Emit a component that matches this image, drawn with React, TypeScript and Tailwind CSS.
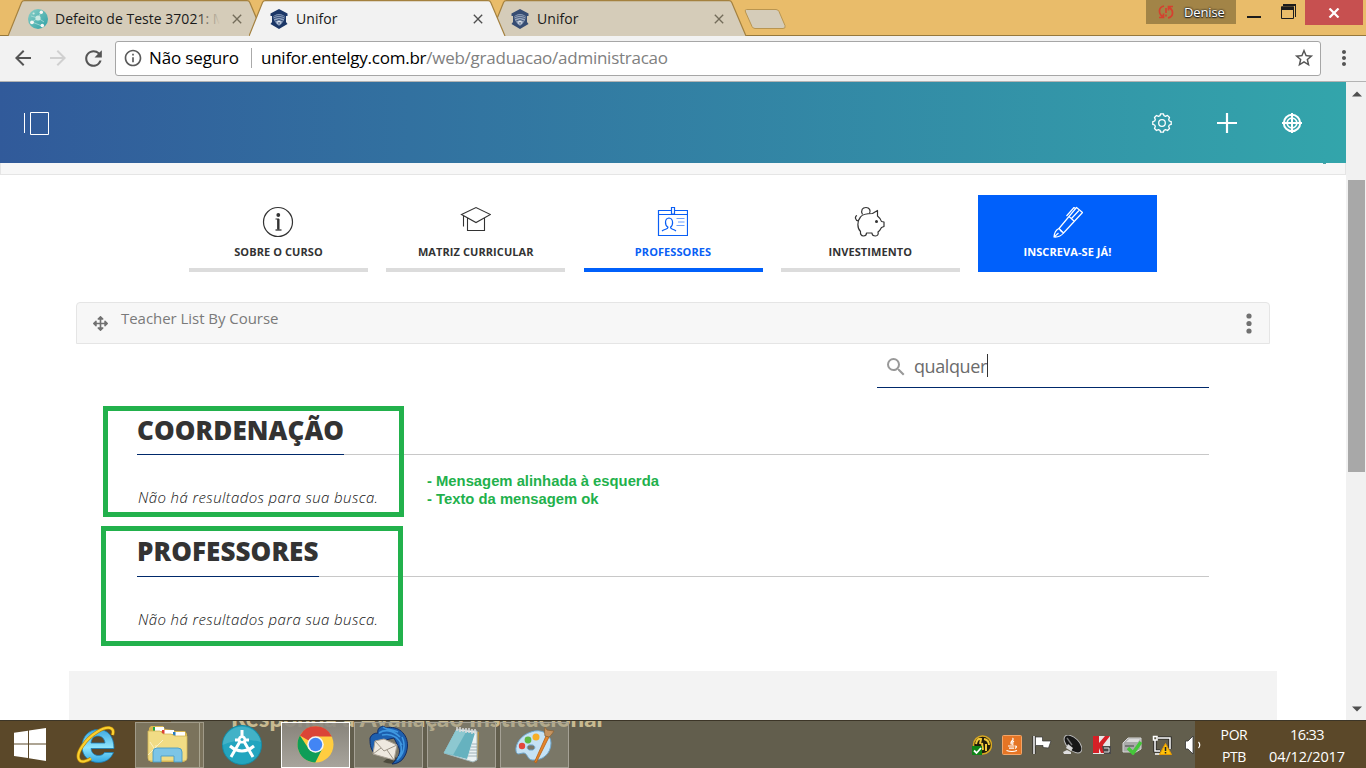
import React from "react";
import {
  MdArrowBack,
  MdArrowForward,
  MdClose,
  MdInfoOutline,
  MdMoreVert,
  MdRefresh,
  MdSearch,
  MdStarBorder,
} from "react-icons/md";
import { FaArrowsAlt } from "react-icons/fa";

/* ---------- Browser chrome ---------- */

function GlobeFavicon() {
  return (
    <svg width="20" height="20" viewBox="0 0 20 20">
      <defs>
        <linearGradient id="globe" x1="0" y1="0" x2="1" y2="1">
          <stop offset="0" stopColor="#7fd0c9" />
          <stop offset="1" stopColor="#119aa3" />
        </linearGradient>
      </defs>
      <circle cx="10" cy="10" r="10" fill="url(#globe)" />
      <path d="M4 13 L10 9 L13 3 M10 9 L16 13 M4 13 L14 17 M3 7 L10 9" stroke="#a5e0dc" strokeWidth="0.8" fill="none" />
      <circle cx="10" cy="9" r="2.6" fill="#c9efea" />
      <circle cx="4" cy="13.3" r="1.9" fill="#fff" />
      <circle cx="13.3" cy="3.2" r="1.7" fill="#fff" />
      <circle cx="14.3" cy="16.6" r="1.8" fill="#fff" />
      <circle cx="5.6" cy="4.5" r="1.1" fill="#c9efea" />
    </svg>
  );
}

function CrestFavicon() {
  return (
    <svg width="20" height="20" viewBox="0 0 20 20">
      <path d="M10 0 L18.5 4.5 V7 H17 V13 L18.500 15 L10 20 L1.500 15 L3 13 V7 H1.500 V4.500 Z" fill="#1c3767" />
      <path d="M4.500 7 Q10 3 15.500 7 Q16 12.500 10 16.800 Q4 12.500 4.500 7 Z" fill="#8fa2bf" />
      <path d="M5 7.500 Q10 5 15 7.500 M5 9.500 Q10 7 15 9.500 M6 12 Q10 9 14 12" fill="none" stroke="#2b4573" strokeWidth="0.9" />
      <path d="M8.500 12 H11.500 V15 H8.500 Z" fill="#e2e8f0" />
      <path d="M9.500 13 H10.500 V15 H9.500 Z" fill="#1c3767" />
    </svg>
  );
}

function Tab({
  title,
  active,
  icon,
  className,
  fade,
}: {
  title: string;
  active?: boolean;
  icon: React.ReactNode;
  className: string;
  fade?: boolean;
}) {
  return (
    <div className={`relative h-9 w-[257px] shrink-0 ${className}`}>
      <svg className="absolute inset-0" width="257" height="36" viewBox="0 0 257 36">
        <path
          d="M0 36 L13.500 2.500 Q14.300 0.700 16.500 0.700 H239 Q241 0.700 241.800 2.500 L256 36"
          fill={active ? "#f2f2f2" : "#d5ccb9"}
          stroke="#a4813f"
          strokeWidth="1.2"
        />
      </svg>
      <div className="relative flex h-9 items-center pt-[2px] pl-5">
        <span className={active ? "" : "opacity-85"}>{icon}</span>
        <span
          className={`relative ml-[7px] w-[165px] overflow-hidden text-[14px] leading-5 whitespace-nowrap text-[#1a1a1a] ${fade ? "tracking-[0.020px]" : "tracking-[0.080px]"}`}
        >
          {title}
          {fade && <span className="absolute top-0 right-0 h-5 w-5 bg-linear-to-r from-[#d5ccb9]/20 to-[#d5ccb9]" />}
        </span>
        <MdClose size={16} className={`ml-[9px] ${active ? "text-[#4f4f4f]" : "text-[#736c5a]"}`} />
      </div>
    </div>
  );
}

function TabStrip() {
  return (
    <div className="relative flex h-9 border-b border-[#96783c] bg-[#e9bc6a] pl-2">
      <Tab title="Defeito de Teste 37021: M" icon={<GlobeFavicon />} className="" fade />
      <Tab title="Unifor" icon={<CrestFavicon />} className="z-10 -ml-4" active />
      <Tab title="Unifor" icon={<CrestFavicon />} className="-ml-4" />
      <svg className="mt-[8px] -ml-[4px] shrink-0" width="44" height="23" viewBox="0 0 44 23">
        <path
          d="M3.500 1.500 H33 Q35 1.500 36 3.500 L42 17.500 Q43 20.500 40 20.500 H12 Q10 20.500 9 18.500 L2.500 4 Q1.500 1.500 3.500 1.500 Z"
          fill="#d5ccb9"
          stroke="#b99550"
        />
      </svg>
      <div className="ml-auto flex pr-[3px]">
        <div className="flex h-6 w-[90px] items-center bg-[#a28447] pl-3">
          <svg width="16" height="16" viewBox="0 0 16 16" fill="none" stroke="#d5402f" strokeWidth="1.700">
            <path d="M6 2 C0.500 3 0 9 4.500 12.500 M1 13.500 H5.500 V9.500 M10 14 C15.500 13 16 7 11.500 3.500 M15 2.500 H10.500 V6.500" />
            <path d="M8 4 V9 M8 10.500 V12.500" />
          </svg>
          <span className="ml-[10px] text-[13px] leading-5 font-medium tracking-[-0.15px] text-white [text-shadow:0_0_2px_#222,0_0_2px_#222,0_1px_1px_#222]">Denise</span>
        </div>
        <svg className="ml-[11px]" width="58" height="24" viewBox="0 0 58 24">
          <path d="M0 16 H14 V18 H0 Z" fill="#1c1c1c" />
          <path d="M36 4 H49 V17 H48 V6 H36 Z" fill="#1c1c1c" />
          <path d="M34.500 7 H46.500 V18.500 H34.500 Z" fill="none" stroke="#1c1c1c" />
          <path d="M34 6.500 H47 V10 H34 Z" fill="#1c1c1c" />
        </svg>
        <div className="flex h-[25px] w-[58px] items-center justify-center bg-[#c75050]">
          <svg width="12" height="10" viewBox="0 0 12 10">
            <path d="M1.500 0.500 L10.500 9.500 M10.500 0.500 L1.500 9.500" stroke="#fff" strokeWidth="2.200" />
          </svg>
        </div>
      </div>
    </div>
  );
}

function Toolbar() {
  return (
    <div className="flex h-[46px] items-center border-b border-[#b3b3b3] bg-[#f2f2f2] pb-px">
      <MdArrowBack size={24} className="ml-[11px] text-[#555]" />
      <MdArrowForward size={24} className="ml-[11px] text-[#d0d0d0]" />
      <MdRefresh size={25} className="ml-[11px] text-[#555]" />
      <div className="ml-[9px] flex h-[35px] w-[1206px] items-center rounded-[3px] border border-[#a6a6a6] bg-white pl-[7px] text-[17px]">
        <MdInfoOutline size={20} className="text-[#5a5a5a]" />
        <span className="ml-[6px] w-[91px] tracking-[-0.150px] whitespace-nowrap text-black">Não seguro</span>
        <span className="ml-[11px] h-5 w-px bg-[#aaa]" />
        <span className="ml-[9px] tracking-[-0.250px] whitespace-nowrap text-[#808080]">
          <span className="text-black">unifor.entelgy.com.br</span>/web/graduacao/administracao
        </span>
        <MdStarBorder size={22} className="mr-[5px] ml-auto text-[#555]" />
      </div>
      <MdMoreVert size={24} className="ml-[11px] text-[#555]" />
    </div>
  );
}

/* ---------- Page ---------- */

function SiteHeader() {
  return (
    <header className="flex h-[81px] items-center bg-linear-to-r from-[#315a9a] to-[#33a5ab] pr-[44px] pl-6">
      <svg className="mt-[2px]" width="26" height="24" viewBox="0 0 26 24" fill="none" stroke="#fff">
        <path d="M0.500 1 V21 M6.500 0.500 H24.500 V22.500 H6.500 Z" />
      </svg>
      <svg className="mt-px ml-auto" width="20" height="20" viewBox="0 0 20 20" fill="none" stroke="#fff" strokeWidth="1.300">
        <path d="M8.600 0.800 H11.400 L12 2.700 L13.500 3.300 L15.400 2.400 L17.500 4.500 L16.700 6.400 L17.300 8 L19.200 8.600 V11.400 L17.300 12 L16.700 13.600 L17.500 15.500 L15.500 17.500 L13.600 16.700 L12 17.300 L11.400 19.200 H8.600 L8 17.300 L6.400 16.700 L4.500 17.500 L2.500 15.500 L3.300 13.600 L2.700 12 L0.800 11.400 V8.600 L2.700 8 L3.300 6.400 L2.500 4.500 L4.500 2.500 L6.400 3.300 L8 2.700 Z" strokeLinejoin="round" />
        <circle cx="10" cy="10" r="3.300" />
      </svg>
      <svg className="mt-px ml-[45px]" width="20" height="20" viewBox="0 0 20 20" stroke="#fff" strokeWidth="2.200">
        <path d="M10 0 V20 M0 10 H20" />
      </svg>
      <svg className="mt-px ml-[45px]" width="20" height="20" viewBox="0 0 20 20" fill="none" stroke="#fff">
        <circle cx="10" cy="10" r="8.200" strokeWidth="2" />
        <circle cx="10" cy="10" r="4.800" strokeWidth="1.700" />
        <path d="M10 0 V20 M0 10 H20" strokeWidth="2" />
      </svg>
    </header>
  );
}

const InfoIcon = () => (
  <svg width="32" height="32" viewBox="0 0 32 32" fill="none" stroke="#333">
    <circle cx="16" cy="16" r="14.500" strokeWidth="1.200" />
    <circle cx="16.300" cy="9" r="1.900" fill="#333" stroke="none" />
    <path d="M13.500 13 H16.500 V23.500" strokeWidth="1.100" />
    <path d="M16.300 13 V23.500" strokeWidth="2.400" />
    <path d="M13.500 24 H19.500" strokeWidth="1.300" />
  </svg>
);

const CapIcon = () => (
  <svg width="32" height="32" viewBox="0 0 32 32" fill="none" stroke="#333" strokeWidth="1.100">
    <path d="M2.500 8.500 L17 1.500 L31.500 8.500 L17 16.500 Z M8.500 11.800 V24.500 H25.500 V11.800 M4.500 9.500 V20.500" />
  </svg>
);

const BadgeIcon = () => (
  <svg width="32" height="32" viewBox="0 0 32 32" fill="none" stroke="#0a5ff5" strokeWidth="1.200">
    <path d="M2.500 4.500 H31.500 V29.500 H2.500 Z M2.500 8.500 H31.500" />
    <path d="M15.500 1.500 H18.500 V8 H15.500 Z" fill="#fff" />
    <path d="M6 25 C9 22.700 12 23.500 12 21.200 C8.500 19 8.500 12.500 13 12 C17.500 12.500 17.500 19 14.500 21.200 C14.500 23.500 17 22.700 20 25" />
    <path d="M20.500 12.500 H28.500 M22 16 H28.500 M20.500 19.500 H28.500" stroke="#6aa0ff" />
  </svg>
);

const PigIcon = () => (
  <svg width="32" height="32" viewBox="0 0 32 32" fill="none" stroke="#333" strokeWidth="1.200" strokeLinejoin="round">
    <g transform="translate(1 0)">
      <path d="M6.500 11 C8 8.500 12 7.500 18.500 7.500 L23.500 4.500 V10 C26 12 27 13 27.500 15.500 L30 16 V20.500 L27.500 21.500 C26.500 23.500 25.500 25 24 26 Q25 29.500 21.500 30 Q18 30 18 27 H12.500 Q12.500 30 9.500 30 Q6 29.500 6.500 25.500 C3 22 3 15 6.500 11 Z" />
      <path d="M8.500 8.500 C6.500 4 8.500 1.500 12 1.500 C15.500 1.500 17 4.500 15.500 7.500 M4.500 15 C1 14.500 0.500 10.500 3 9.500" />
      <circle cx="22.500" cy="15.500" r="1.500" fill="#333" stroke="none" />
    </g>
  </svg>
);

const PenIcon = () => (
  <svg width="32" height="32" viewBox="0 0 32 32" fill="none" stroke="#fff" strokeWidth="1.200" strokeLinejoin="round">
    <path d="M25.500 1.500 L31.500 6.500 L12.500 27 L8 22.500 Z" />
    <path d="M24.500 2.500 L23 1.500 L15.500 10 M28 4.500 L20 13 M18 10.500 L23 15" />
    <path d="M8 22.500 Q3.500 24.500 3 31 Q9 31.500 12.500 27 M3 31 L7.500 27 M9 24 L11 26" />
  </svg>
);

const tabs = [
  { label: "SOBRE O CURSO", icon: <InfoIcon />, style: "border-[#dcdcdc] text-[#333]" },
  { label: "MATRIZ CURRICULAR", icon: <CapIcon />, style: "border-[#dcdcdc] text-[#333]" },
  { label: "PROFESSORES", icon: <BadgeIcon />, style: "border-[#0060fb] text-[#0a5ff5]" },
  { label: "INVESTIMENTO", icon: <PigIcon />, style: "border-[#dcdcdc] text-[#333]" },
  { label: "INSCREVA-SE JÁ!", icon: <PenIcon />, style: "border-[#0060fb] bg-[#0060fb] text-white" },
];

function CourseNav() {
  return (
    <nav className="mt-5 ml-[189px] grid w-[968px] grid-cols-5 gap-[18.250px]">
      {tabs.map((t) => (
        <div key={t.label} className={`flex h-[77px] flex-col items-center border-b-4 pt-[11px] ${t.style}`}>
          <span className="mr-[2px] block h-8">{t.icon}</span>
          <span className="mt-[5px] text-[11px] leading-[18px] font-bold tracking-[0.080px] whitespace-nowrap">{t.label}</span>
        </div>
      ))}
    </nav>
  );
}

function Section({ title, titlePadding }: { title: string; titlePadding: string }) {
  return (
    <section className="mr-[137px] ml-[137px]">
      <div className="flex h-[67px] items-end border-b border-[#c8c8c8]">
        <h2
          className={`-mb-px border-b border-[#00296b] text-[26px] leading-9 font-extrabold tracking-[0.080px] text-[#333] ${titlePadding}`}
        >
          {title}
        </h2>
      </div>
      <p className="mt-[30px] h-[25px] pl-px text-[15px] leading-6 font-light tracking-[0.400px] text-[#111] italic">
        Não há resultados para sua busca.
      </p>
    </section>
  );
}

function Page() {
  return (
    <div className="relative h-full w-[1346px] overflow-hidden bg-white font-['Open_Sans',sans-serif]">
      <SiteHeader />
      <div className="flex h-3 border-x border-b border-[#e5e5e5] bg-[#f7f7f7]">
        <span className="mr-[19px] ml-auto h-px w-[3px] bg-[#4fa3a5]" />
      </div>
      <CourseNav />
      <div className="mt-[30px] mr-[76px] ml-[76px] flex h-[42px] rounded-t-[4px] border border-[#e5e5e5] bg-[#f7f7f7] pl-4 text-[#717171]">
        <FaArrowsAlt size={15} className="mt-[13px]" />
        <span className="ml-[13px] pt-[4px] text-[15px] leading-[22px] tracking-[-0.040px] whitespace-nowrap text-[#7a7a7a]">Teacher List By Course</span>
        <svg className="mt-[10px] mr-[17px] ml-auto" width="6" height="21" viewBox="0 0 6 21" fill="#717171">
          <circle cx="3" cy="3" r="2.600" />
          <circle cx="3" cy="10.500" r="2.600" />
          <circle cx="3" cy="18" r="2.600" />
        </svg>
      </div>
      <div className="mr-[137px] ml-auto flex h-11 w-[332px] items-center border-b border-[#00296b] pl-[7px]">
        <MdSearch size={24} className="mt-[2px] text-[#999]" />
        <span className="ml-[6px] text-[18px] leading-6 tracking-[-0.400px] text-[#6b6b6b]">qualquer</span>
        <span className="h-[23px] w-px bg-[#333]" />
      </div>
      <Section title="COORDENAÇÃO" titlePadding="pb-[6px]" />
      <Section title="PROFESSORES" titlePadding="pb-[7px]" />
      <footer className="mt-[39px] mr-[69px] ml-[69px] h-[60px] bg-[#f3f3f3]" />

      {/* Review annotations drawn over the page */}
      <div className="absolute top-[324px] left-[103px] h-[111px] w-[301px] border-5 border-[#22b14c]" />
      <div className="absolute top-[444px] left-[101px] h-[120px] w-[302px] border-5 border-[#22b14c]" />
      <div className="absolute top-[390px] left-[427px] font-['Liberation_Sans',sans-serif] text-[14.800px] leading-[18px] font-bold whitespace-nowrap text-[#22b14c]">
        <p>- Mensagem alinhada à esquerda</p>
        <p>- Texto da mensagem ok</p>
      </div>
    </div>
  );
}

function Scrollbar() {
  return (
    <div className="flex w-5 flex-col items-center bg-[#f1f1f1] pl-px">
      <svg className="mt-[9px] shrink-0" width="10" height="6" viewBox="0 0 10 6">
        <path d="M0 5.500 L5 0.500 L10 5.500 Z" fill="#505050" />
      </svg>
      <div className="mt-[83px] h-[292px] w-[17px] shrink-0 bg-[#a8a8a8]" />
      <svg className="mt-auto mb-2 shrink-0" width="10" height="6" viewBox="0 0 10 6">
        <path d="M0 0.500 L5 5.500 L10 0.500 Z" fill="#505050" />
      </svg>
    </div>
  );
}

/* ---------- Taskbar ---------- */

const IeIcon = () => (
  <svg width="40" height="40" viewBox="0 0 40 40" fill="none">
    <defs>
      <linearGradient id="ie" x1="0" y1="0" x2="0" y2="1">
        <stop offset="0" stopColor="#3fa9e0" />
        <stop offset="0.550" stopColor="#8fe6fd" />
        <stop offset="1" stopColor="#2fa7e2" />
      </linearGradient>
    </defs>
    <path d="M37.500 27.500 C35 34 29 37.500 22.500 37.500 C13 37.500 6 31 6 21.500 C6 11.500 13 4.500 22 4.500 C32 4.500 38 11.500 38 23.500 H15 C15.500 28 18.500 30.500 22.500 30.500 C25.500 30.500 27.500 29.500 28.500 27.500 Z M15 18 H29 C28.500 13.500 25.500 11 22 11 C18 11 15.500 13.500 15 18 Z" fill="url(#ie)" fillRule="evenodd" stroke="#1b7fb9" strokeWidth="0.800" />
    <path d="M36.500 10 C39.500 1.500 31 0.500 21 7 C9 14.500 -0.500 28.500 3 34.500 C5 38 10.500 36.500 15 33.500" stroke="#b98608" strokeWidth="3.400" />
    <path d="M36.500 10 C39.500 1.500 31 0.500 21 7 C9 14.500 -0.500 28.500 3 34.500 C5 38 10.500 36.500 15 33.500" stroke="#fbd02f" strokeWidth="2.100" />
  </svg>
);

const ExplorerIcon = () => (
  <svg width="42" height="40" viewBox="0 0 42 40">
    <path d="M2 3 L4 1 H16 L18 4 L26 5 L28 6 H38 L40 9 V34 L37 37 H4 L1 35 Z" fill="#d9b64f" />
    <path d="M6 2 H17 V6 H6 Z M15 5 H27 V9 H15 Z M26 7 H38 V11 H26 Z" fill="#fff" />
    <path d="M6 2 H8 V6 H6 Z" fill="#23a343" />
    <path d="M15 5 H17.500 V9 H15 Z" fill="#dd4236" />
    <path d="M26 7 H28.500 V11 H26 Z" fill="#257dc2" />
    <path d="M1 6 H13 L16 9 H24 L28 11 H40 V33 Q40 36 37 36 H4 Q1 36 1 33 Z" fill="#f1dc85" stroke="#d3b557" strokeWidth="0.800" />
    <path d="M1 30 L9 22 L16 15 M3 17 L9 26 M9 20 V30" stroke="#fffbe0" opacity="0.700" />
    <path d="M6 37 V27 Q6 23 10 23 H31 Q35 23 35 27 V37 H27 V31 H14 V37 Z" fill="#7dc5e6" stroke="#4a9bc4" strokeWidth="0.900" />
  </svg>
);

const CompassIcon = () => (
  <svg width="40" height="40" viewBox="0 0 40 40" fill="none">
    <circle cx="20" cy="20" r="19.500" fill="#23a5bf" stroke="#168ba5" />
    <path d="M0.500 20 A19.500 19.500 0 0 1 39 17 Q20 12 0.500 20" fill="#62c0d0" opacity="0.500" />
    <path d="M20 5 V11 M20 13 L9 32 M20 13 L31 32 M13 15 H27 M8 21 Q20 31 32 21" stroke="#fff" strokeWidth="3" />
    <circle cx="20" cy="14.500" r="4" fill="#fff" />
    <circle cx="20" cy="14.500" r="1.500" fill="#36adc4" />
  </svg>
);

const ChromeIcon = () => (
  <svg width="37" height="37" viewBox="0 0 37 37">
    <circle cx="18.500" cy="18.500" r="18" fill="#ffcd40" />
    <path d="M18.500 18.500 L2.900 9.500 A18 18 0 0 1 34.800 10.500 H18.500 Z" fill="#db4437" />
    <path d="M2.900 9.500 A18 18 0 0 0 18.300 36.500 L25.400 22.500 L18.500 26.500 L11.500 22.500 Z" fill="#0f9d58" />
    <circle cx="18.500" cy="18.500" r="8.300" fill="#f4f4f4" />
    <circle cx="18.500" cy="18.500" r="6.700" fill="#4285f4" />
  </svg>
);

const ThunderbirdIcon = () => (
  <svg width="40" height="40" viewBox="0 0 40 40">
    <path d="M14 37 Q28 42 35 33 L20 32 Z" fill="#4c4a3d" />
    <path d="M1 13 Q3 8 9 8 C8 5 10 2 14 1 L17 3 C29 0 39 9 38.500 21 C38 31 32 39 23 39 C28 34 32 29 30 23 L25 13 L8 17 L5 28 C1 23 1 18 1 13 Z" fill="#1d5fae" stroke="#112d66" />
    <path d="M10 8 C16 4 24 5 31 12 M13 10 C22 8 29 12 33 20 M14 2 C17 5 23 4 29 7 M33 12 C37 20 35 29 28 35 M31 18 C34 24 32 30 29 33" stroke="#3f98e0" strokeWidth="1.600" fill="none" />
    <path d="M6 16 L15 14 L28 20 L25 35 L4 29 Z" fill="#eee9df" stroke="#aaa296" />
    <path d="M6 16 L15 26 L28 20 M4 29 L12 23 M25 35 L18 25" fill="none" stroke="#9d9588" />
  </svg>
);

const NotepadIcon = () => (
  <svg width="38" height="38" viewBox="0 0 38 38">
    <path d="M15 3 L36 6 L35 32 L29 36 Z" fill="#b9903c" />
    <path d="M14 3 L34 5 V34 L30 36 L1 27 Z" fill="#eaf2f3" stroke="#a3b8bd" />
    <path d="M13 4 L32 7 L24 33 L1 27 Z" fill="#66b2bf" />
    <path d="M13 4 L23 6 L10 29 L1 27 Z" fill="#8dc8d0" />
    <path d="M29 18 H34 M28 21 H34 M27 24 H34 M26 27 H34 M25 30 H34" stroke="#8da1a8" strokeWidth="0.800" />
    <path d="M14 1 V5 M17 1 V6 M20 2 V6 M23 2 V7 M26 2 V7 M29 3 V8 M32 3 V8" stroke="#d9d9d9" strokeWidth="1.500" />
  </svg>
);

const PaintIcon = () => (
  <svg width="40" height="40" viewBox="0 0 40 40">
    <path d="M16 7 C26 3 36 9 36 18 C36 29 27 36 17 35 C12 34 13 29 9 28 C5 28 2 31 1 26 C0 19 6 10 16 7 Z M16 20 A3 2.600 0 1 0 16 25 A3 2.600 0 1 0 16 20" fill="#c5e2f5" stroke="#6fa7ce" fillRule="evenodd" />
    <circle cx="7" cy="21" r="3.200" fill="#e2463c" />
    <circle cx="13" cy="15" r="3.400" fill="#5fb846" />
    <circle cx="21" cy="12" r="3.500" fill="#f7ae27" />
    <path d="M31 11 L34 12 L21 38 L19.500 37 Z" fill="#e6862b" stroke="#b35d14" strokeWidth="0.800" />
    <path d="M30 2 L32 5 L39 6 Q36 11 34 12 L30 11 Q29 7 30 2 Z" fill="#c69460" stroke="#8e6536" strokeWidth="0.800" />
  </svg>
);

function TaskButton({ icon, active }: { icon: React.ReactNode; active?: boolean }) {
  return (
    <div
      className={`mr-1 flex h-[46px] w-[69px] shrink-0 items-center justify-center border ${
        active ? "border-white bg-linear-to-b from-[#8c8880]/90 to-[#a8a49c]" : "border-[#a5a195] bg-[#9a9688]/45"
      }`}
    >
      {icon}
    </div>
  );
}

function Tray() {
  return (
    <div className="ml-auto flex items-center gap-[10px]">
      <svg width="20" height="20" viewBox="0 0 20 20">
        <circle cx="10.500" cy="10" r="9" fill="#211b0b" stroke="#d8a820" strokeWidth="1.500" />
        <path d="M4 9 Q5 3 9 4 L8 9 M12 4 Q17 5 17 10 M10 8 L11 15 M14 9 L14 16" stroke="#f1c83b" strokeWidth="2" fill="none" />
        <path d="M0 11 H10 V20 H0 Z" fill="#108316" />
        <path d="M2 15.500 L4.500 18 L9 13" stroke="#fff" strokeWidth="1.800" fill="none" />
      </svg>
      <svg width="20" height="20" viewBox="0 0 20 20" fill="none" stroke="#fff">
        <rect x="0.500" y="0.500" width="19" height="19" rx="1" fill="#e57525" stroke="#f3a567" />
        <path d="M10.500 3 C13 5 7 6.500 9.500 9.500 M12 6 C9 8 12 8 10.500 10 M6 11 H12.500 M7 13.200 H12 M13 11 Q16 11 13 13.500 M4.500 15.500 Q10 17.500 15 15.500" strokeWidth="1.200" />
      </svg>
      <svg width="20" height="20" viewBox="0 0 20 20">
        <path d="M2 1 V19" stroke="#1e1e1e" strokeWidth="3" />
        <path d="M2 1 V19" stroke="#fff" strokeWidth="1.500" />
        <path d="M3.500 2 H10.500 V6 H19 L16.500 13 L11 12.500 V10.500 H3.500 Z" fill="#fff" stroke="#333" strokeWidth="0.700" />
      </svg>
      <svg width="20" height="20" viewBox="0 0 20 20">
        <ellipse cx="11" cy="9" rx="11" ry="6" transform="rotate(45 11 9)" fill="#171717" stroke="#b8b8b8" />
        <path d="M5 3 L10 10" stroke="#777" strokeWidth="1.300" fill="none" />
        <path d="M6 9 L11 13 L9 16 L4 13 Z" fill="#d8d8d8" />
        <path d="M1 17 L5 15 L9 17 V19 H2 Z" fill="#dedede" />
      </svg>
      <svg width="20" height="20" viewBox="0 0 20 20">
        <path d="M1 1 H18 V19 H1 Z" fill="#e6e6e6" />
        <path d="M1 1 H7 V8 L13 1 H18 L11 10 L13 18 H9 L7 13 V18 H1 Z" fill="#d52027" />
        <path d="M10 11 H19 V19 H12 Z" fill="#494949" />
        <path d="M12 13 H17 V17 H12" stroke="#ddd" fill="none" />
      </svg>
      <svg width="20" height="20" viewBox="0 0 20 20">
        <path d="M1 8 L6 3 H19 V14 L14 17 H1 Z" fill="#a9aaa9" stroke="#d8d8d8" />
        <path d="M4 7 L7 4 H18 L16 7 Z" fill="#d9d9d9" />
        <path d="M3 11 H12" stroke="#666" strokeWidth="1.500" />
        <path d="M6 13 L11 18 L19 7" stroke="#45c63a" strokeWidth="3.500" fill="none" />
      </svg>
      <svg width="20" height="20" viewBox="0 0 20 20" fill="none">
        <path d="M3 5 V16 H8 M6 3 H18 V14" stroke="#222" strokeWidth="3.200" />
        <path d="M3 5 V16 H8 M6 3 H18 V14 M1.500 1.500 H5 V5 H1.500 Z M3 19 H8" stroke="#fff" strokeWidth="1.500" />
        <path d="M13.500 8.500 L19.500 19.500 H7.500 Z" fill="#ffc20a" stroke="#e89b00" />
        <path d="M13.500 12 V16 M13.500 17 V18.500" stroke="#222" strokeWidth="1.500" />
      </svg>
      <svg width="20" height="20" viewBox="0 0 20 20">
        <path d="M3.500 6 H6 L11 1 V19 L6 14 H3.500 Z" fill="#fff" stroke="#333" strokeWidth="0.800" />
        <path d="M16.500 7 Q19 10 16.500 13" fill="none" stroke="#fff" strokeWidth="1.200" />
      </svg>
    </div>
  );
}

function Taskbar() {
  return (
    <div className="relative flex h-12 overflow-hidden border-t border-[#3c3527] bg-[linear-gradient(90deg,#5b4829_171px,#625e4d_171px,#625e4d_1195px,#5b4829_1195px)] font-['Open_Sans',sans-serif]">
      <div className="absolute top-[-16px] left-[231px] font-['Lato','Open_Sans',sans-serif] text-[24px] leading-[26px] font-black tracking-[0.050px] whitespace-nowrap text-[#c8ba90]">
        Responda a Avaliação Institucional
      </div>
      <div className="relative flex w-[1195px] items-center">
        <svg className="ml-[14px] shrink-0" width="32" height="33" viewBox="0 0 32 33" fill="#fff">
          <path d="M0 4.700 L14 2.700 V15.500 H0 Z M15 2.500 L32 0 V15.500 H15 Z M0 16.500 H14 V30 L0 28 Z M15 16.500 H32 V33 L15 30.300 Z" />
        </svg>
        <span className="ml-[30px] shrink-0"><IeIcon /></span>
        <div className="ml-[19px] flex h-[46px] w-[69px] shrink-0 border border-[#a09a88] bg-[#7b735c]">
          <div className="flex w-[64px] items-center justify-center border-r border-[#a9a48f]"><ExplorerIcon /></div>
        </div>
        <span className="mr-[19px] ml-[18px] shrink-0"><CompassIcon /></span>
        <TaskButton icon={<ChromeIcon />} active />
        <TaskButton icon={<ThunderbirdIcon />} />
        <TaskButton icon={<NotepadIcon />} />
        <TaskButton icon={<PaintIcon />} />
        <div className="mr-[-7px] ml-auto flex"><Tray /></div>
      </div>
      <div className="relative flex flex-1 pt-[3px] text-center text-[14px] leading-[22px] text-white">
        <div className="ml-[22px] w-[34px] tracking-[-0.400px]">
          <p>POR</p>
          <p>PTB</p>
        </div>
        <div className="ml-[15px] w-[82px] text-[14.500px] tracking-[-0.100px] whitespace-nowrap">
          <p className="tracking-[-0.600px]">16:33</p>
          <p>04/12/2017</p>
        </div>
      </div>
    </div>
  );
}

export default function App() {
  return (
    <div className="flex h-[768px] w-[1366px] flex-col overflow-hidden bg-white font-['Open_Sans',sans-serif]">
      <TabStrip />
      <Toolbar />
      <div className="flex h-[638px] shrink-0">
        <Page />
        <Scrollbar />
      </div>
      <Taskbar />
    </div>
  );
}
